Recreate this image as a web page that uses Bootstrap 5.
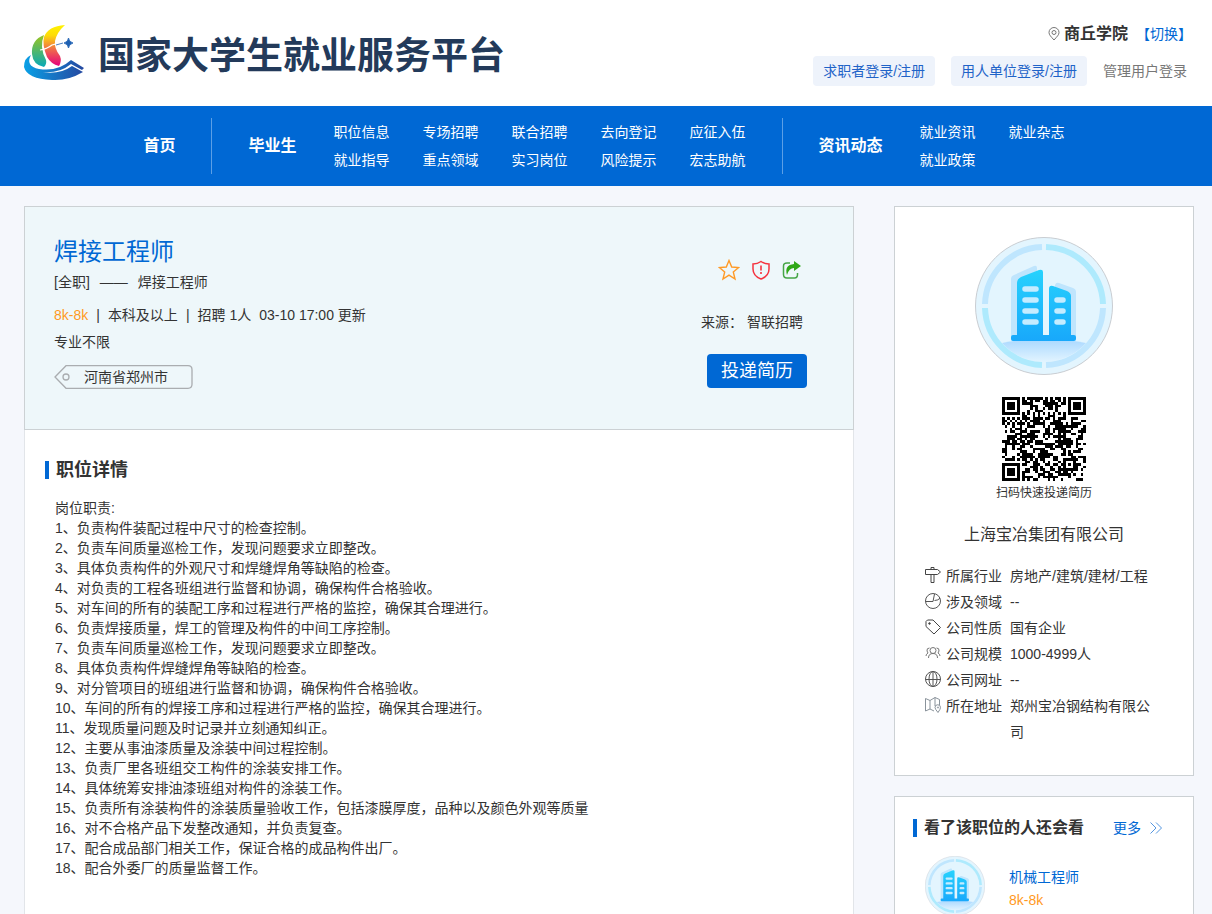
<!DOCTYPE html>
<html lang="zh-CN">
<head>
<meta charset="utf-8">
<meta name="viewport" content="width=device-width, initial-scale=1">
<title>焊接工程师 - 国家大学生就业服务平台</title>
<link href="https://cdn.jsdelivr.net/npm/bootstrap@5.3.0/dist/css/bootstrap.min.css" rel="stylesheet">
<style>
:root { --brand: #0068d4; --ink: #333; --line: #ccd1d4; }
body { font: 14px/20px "Liberation Sans", "Noto Sans CJK SC", sans-serif; color: var(--ink); background: #f5f7fc; }
a { color: var(--brand); text-decoration: none; }
a:hover { text-decoration: underline; }
svg { display: block; flex: none; }
.site-head { padding: 24px 25px 20px 24px; }
.brand-link { gap: 14px; }
.site-name { font-size: 37px; line-height: 56px; font-weight: 700; color: #233a5a; }
.account { gap: 12px; }
.school { font-size: 16px; font-weight: 700; }
.school-row { margin-right: -5px; }
.login-btn { height: 30px; padding: 0 10px; font-size: 14px; line-height: 30px; background: #eef3fb; border: 0; border-radius: 4px; color: #1f63c8; }
.muted-link { color: #777; }
.site-nav { background: var(--brand); min-height: 80px; padding: 12px 4px 12px 0; }
.site-nav a { color: #fff; white-space: nowrap; }
.nav-head { font-size: 16px; font-weight: 700; }
.nav-sub { display: grid; grid-auto-flow: column; grid-template-rows: 28px 28px; column-gap: 33px; line-height: 28px; margin-left: 37px; }
.rule { width: 1px; background: #5c9fe6; margin: 0 36px; }
.page { padding: 20px 18px 20px 24px; gap: 40px; }
.side { width: 300px; flex: none; }
.panel { background: #fff; border: 1px solid var(--line); }
.job-main { background: #fff; border: 1px solid #e2e5e9; border-top: 0; padding: 26px 20px 60px; }
.job-head { background: #eef7fa; border: 1px solid var(--line); padding: 29px 46px 40px 29px; }
.job-title { font-size: 24px; line-height: 32px; color: var(--brand); margin: 0; font-weight: 400; }
.job-kind { gap: 10px; margin: 4px 0 13px; }
.job-major { margin: 7px 0 13px; }
.pay { color: #ff9a1f; }
.city-tag { position: relative; width: 139px; height: 24px; line-height: 24px; padding-left: 30px; }
.city-tag svg { position: absolute; left: 0; top: 0; }
.job-side { width: 108px; padding-top: 23px; }
.job-tools { padding-right: 6px; }
.job-source { margin: 31px 4px 22px 0; }
.apply { width: 100px; height: 34px; font-size: 18px; line-height: 32px; padding: 0; background: var(--brand); color: #fff; border: 0; border-radius: 4px; }
.bar-title { font-weight: 700; line-height: 28px; margin: 0; display: flex; align-items: center; }
.bar-title::before { content: ""; width: 4px; height: 18px; background: var(--brand); margin-right: 7px; }
.bar-lg { font-size: 18px; }
.bar-md { font-size: 16px; }
.duties { margin: 14px 10px 0; }
.duties p { margin: 0; }
.icon-btn { border: 0; background: none; padding: 0; }
.company { padding: 30px; }
.qr-code { margin: 22px auto 2px; }
.qr-note { font-size: 12px; line-height: 20px; }
.company-name { font-size: 16px; line-height: 24px; color: var(--ink); margin: 20px 0 16px; font-weight: 400; }
.facts { margin: 0; }
.facts > div { display: flex; line-height: 26px; }
.facts svg { margin: 4px 5px 0 0; }
.facts dt { font-weight: 400; width: 64px; flex: none; }
.facts dd { margin: 0; }
.also { padding: 17px 30px 30px 18px; margin-top: 20px; }
.also-item { padding: 14px 0 0 12px; }
.also-text { padding-top: 10px; line-height: 23px; }
</style>
</head>
<body>
<svg width="0" height="0" class="position-absolute" aria-hidden="true">
  <defs>
    <linearGradient id="tower" x1="0" y1="0" x2="0" y2="1"><stop offset="0" stop-color="#27d2fd"/><stop offset="1" stop-color="#18a8fb"/></linearGradient>
    <linearGradient id="ground" x1="0" y1="0" x2="0" y2="1"><stop offset="0" stop-color="#a9d8ff"/><stop offset="1" stop-color="#e2f4ff"/></linearGradient>
    <symbol id="building" viewBox="0 0 138 138">
      <circle cx="69" cy="69" r="68.5" fill="#e3f5fe" stroke="#c9cdd2"/>
      <path d="M27 106Q69 98 111 106A56 56 0 0 1 27 106" fill="url(#ground)"/>
      <g fill="none" stroke-width="6">
        <path d="M10 67A59 59 0 0 1 67 10M71 128A59 59 0 0 0 128 71" stroke="#bfe6fe"/>
        <path d="M71 10A59 59 0 0 1 128 67M67 128A59 59 0 0 1 10 71" stroke="#aeeafd"/>
      </g>
      <path d="M36 101V42q0-3 3-4l20-9q3-1 3 2v70zM80 101V48q1-3 4-2l14 5q3 1 3 4v46z" fill="#bfe5fd"/>
      <path d="M36 100q0-2 2-2h4V46q0-4 4-6l18-7q4-1 4 2v63h6V52q0-4 4-3l14 5q4 2 4 5v39h3q2 0 2 2v2q0 2-2 2H38q-2 0-2-2z" fill="url(#tower)"/>
      <path d="M50 52h11M50 63h11M50 74h11M50 85h11M82 63h6M82 74h6M82 85h6" stroke="#c5ecff" stroke-width="5.500" stroke-linecap="round"/>
    </symbol>
  </defs>
</svg>

<header class="site-head bg-white d-flex justify-content-between">
  <a href="#" class="brand-link d-flex align-items-center text-decoration-none">
    <svg width="60" height="60" viewBox="0 2 60 60" aria-hidden="true">
      <defs>
        <linearGradient id="s1" x1="0" y1="0" x2="0" y2="1"><stop offset="0" stop-color="#9bc51d"/><stop offset="1" stop-color="#07a9b9"/></linearGradient>
        <linearGradient id="s2" x1="0" y1="0" x2="0" y2="1"><stop offset="0" stop-color="#fff200"/><stop offset=".25" stop-color="#fddc08"/><stop offset=".6" stop-color="#ef6a4b"/><stop offset="1" stop-color="#e6007e"/></linearGradient>
        <linearGradient id="s3"><stop offset="0" stop-color="#0aa0e6"/><stop offset="1" stop-color="#2548a0"/></linearGradient>
      </defs>
      <path d="M20 12Q7 17 8 31Q9 42 20 44Q23 41 22 37Q15 24 20 12" fill="url(#s1)"/>
      <path d="M41 2Q24 3 20 14Q18 22 23 34Q27 41 35 43Q38 38 36 33Q30 25 31 18Q33 9 41 2" fill="url(#s2)"/>
      <path d="M16 27Q23 26 28 22Q34 20 41 21" fill="none" stroke="#fff" stroke-width="1.200"/>
      <path d="M32 22L39 20" stroke="#1d60b2" stroke-width=".8"/>
      <path d="M40 20Q44 19 44.500 15Q45 19 49 20Q45 21 44.500 25Q44 21 40 20" fill="#1d60b2" stroke="#1d60b2" stroke-width=".8"/>
      <path d="M7 32Q1 43 15 46Q34 49 47 37L60 45L58 47L47 41Q35 51 17 49Q36 52 48 43L59 49Q44 58 28 57Q3 56 0 44Q0 35 7 32" fill="url(#s3)"/>
    </svg>
    <span class="site-name pt-1">国家大学生就业服务平台</span>
  </a>
  <div class="account d-flex flex-column align-items-end justify-content-end">
    <div class="school-row d-flex align-items-center">
      <svg width="12" height="14" viewBox="0 0 12 14" fill="none" stroke="#777"><path d="M6 13C3 9.500 1 8 1 5.500a5 5 0 0 1 10 0C11 8 9 9.500 6 13z"/><circle cx="6" cy="5.500" r="2"/></svg>
      <span class="school ms-1 me-2">商丘学院</span><a href="#">【切换】</a>
    </div>
    <div class="d-flex align-items-center">
      <button type="button" class="login-btn me-3">求职者登录/注册</button>
      <button type="button" class="login-btn me-3">用人单位登录/注册</button>
      <a href="#" class="muted-link">管理用户登录</a>
    </div>
  </div>
</header>

<nav class="site-nav d-flex justify-content-center" aria-label="主导航">
  <a href="#" class="nav-head align-self-center">首页</a>
  <span class="rule"></span>
  <a href="#" class="nav-head align-self-center">毕业生</a>
  <div class="nav-sub">
    <a href="#">职位信息</a><a href="#">就业指导</a>
    <a href="#">专场招聘</a><a href="#">重点领域</a>
    <a href="#">联合招聘</a><a href="#">实习岗位</a>
    <a href="#">去向登记</a><a href="#">风险提示</a>
    <a href="#">应征入伍</a><a href="#">宏志助航</a>
  </div>
  <span class="rule"></span>
  <a href="#" class="nav-head align-self-center">资讯动态</a>
  <div class="nav-sub">
    <a href="#">就业资讯</a><a href="#">就业政策</a>
    <a href="#">就业杂志</a>
  </div>
</nav>

<div class="page d-flex align-items-start">
  <main class="flex-grow-1">
    <section class="job-head d-flex justify-content-between">
      <div>
        <h1 class="job-title">焊接工程师</h1>
        <div class="job-kind d-flex"><span>[全职]</span><span>——</span><span>焊接工程师</span></div>
        <div class="d-flex gap-2"><span class="pay">8k-8k</span><span>|</span><span>本科及以上</span><span>|</span><span>招聘 1人</span><span>03-10 17:00 更新</span></div>
        <div class="job-major">专业不限</div>
        <div class="city-tag">
          <svg width="139" height="24" viewBox="0 0 139 24" fill="none" stroke="#aaadb0" stroke-width="1.300"><path d="M1 12L12 .7H134q4 0 4 4V19.300q0 4-4 4H12z"/><circle cx="12" cy="12" r="3"/></svg>河南省郑州市
        </div>
      </div>
      <div class="job-side d-flex flex-column align-items-end">
        <div class="job-tools d-flex align-items-center gap-2">
          <button type="button" class="icon-btn" aria-label="收藏"><svg width="22" height="22" viewBox="0 0 22 22" fill="none" stroke="#ff9a26" stroke-width="1.400"><path d="M11 1.500l2.700 6.500 7 .5-5.400 4.500 1.700 7-6-3.900-6 3.900 1.700-7L1.300 8.500l7-.5z"/></svg></button>
          <button type="button" class="icon-btn mx-1" aria-label="举报"><svg width="18" height="20" viewBox="0 0 18 20" fill="none" stroke="#f5333f" stroke-width="1.500"><path d="M9 1.500Q12.500 4 17 4V9q0 7-8 10Q1 16 1 9V4Q5.500 4 9 1.500z"/><path d="M9 5.500v5M9 12v2" stroke-width="1.600"/></svg></button>
          <button type="button" class="icon-btn" aria-label="分享"><svg width="19" height="18" viewBox="0 0 19 18"><path d="M8 2H5Q1.500 2 1.500 5v8.500Q1.500 17 5 17h7.500q3 0 3-3.500V12" fill="none" stroke="#46a546" stroke-width="1.500"/><path d="M12 0l7 5-7 5V7Q7 7 5 14Q2 4 12 3z" fill="#30a818"/></svg></button>
        </div>
        <div class="job-source">来源： 智联招聘</div>
        <button type="button" class="apply">投递简历</button>
      </div>
    </section>
    <section class="job-main">
      <h2 class="bar-title bar-lg">职位详情</h2>
      <div class="duties">
        <p>岗位职责:</p>
        <p>1、负责构件装配过程中尺寸的检查控制。</p>
        <p>2、负责车间质量巡检工作，发现问题要求立即整改。</p>
        <p>3、具体负责构件的外观尺寸和焊缝焊角等缺陷的检查。</p>
        <p>4、对负责的工程各班组进行监督和协调，确保构件合格验收。</p>
        <p>5、对车间的所有的装配工序和过程进行严格的监控，确保其合理进行。</p>
        <p>6、负责焊接质量，焊工的管理及构件的中间工序控制。</p>
        <p>7、负责车间质量巡检工作，发现问题要求立即整改。</p>
        <p>8、具体负责构件焊缝焊角等缺陷的检查。</p>
        <p>9、对分管项目的班组进行监督和协调，确保构件合格验收。</p>
        <p>10、车间的所有的焊接工序和过程进行严格的监控，确保其合理进行。</p>
        <p>11、发现质量问题及时记录并立刻通知纠正。</p>
        <p>12、主要从事油漆质量及涂装中间过程控制。</p>
        <p>13、负责厂里各班组交工构件的涂装安排工作。</p>
        <p>14、具体统筹安排油漆班组对构件的涂装工作。</p>
        <p>15、负责所有涂装构件的涂装质量验收工作，包括漆膜厚度，品种以及颜色外观等质量</p>
        <p>16、对不合格产品下发整改通知，并负责复查。</p>
        <p>17、配合成品部门相关工作，保证合格的成品构件出厂。</p>
        <p>18、配合外委厂的质量监督工作。</p>
      </div>
    </section>
  </main>

  <aside class="side">
    <section class="panel company">
      <svg class="mx-auto" width="138" height="138" role="img" aria-label="公司标志"><use href="#building"/></svg>
      <svg id="qr" class="qr-code" width="84" height="84" viewBox="0 0 33 33" shape-rendering="crispEdges" role="img" aria-label="二维码"><path fill="#000"/></svg>
      <div class="qr-note text-center">扫码快速投递简历</div>
      <h2 class="company-name text-center">上海宝冶集团有限公司</h2>
      <dl class="facts">
        <div><svg width="16" height="16" viewBox="0 0 16 16" fill="none" stroke="#444"><path d="M.5 2.500h12l3 2.500-3 2.500H.5zM6 2V.5h3V2M6 7.500v8h3v-8"/></svg><dt>所属行业</dt><dd>房地产/建筑/建材/工程</dd></div>
        <div><svg width="16" height="16" viewBox="0 0 16 16" fill="none" stroke="#555"><circle cx="8" cy="8" r="7.500"/><path d="M.5 8.500H8L9.500 1M9.500 7.500q4 0 5.500-2.500"/></svg><dt>涉及领域</dt><dd>--</dd></div>
        <div><svg width="16" height="16" viewBox="0 0 16 16" fill="none" stroke="#444"><path d="M1 2.500L2.500 1H8l7.500 7.500L9 15 1 7.500z"/><circle cx="4.500" cy="4.500" r=".8" fill="#444"/></svg><dt>公司性质</dt><dd>国有企业</dd></div>
        <div><svg width="16" height="16" viewBox="0 0 16 16" fill="none" stroke="#777"><circle cx="8" cy="5.500" r="3"/><path d="M3.500 13q0-4.500 4.500-4.500t4.500 4.500M4.500 3Q1.500 3 2 6l1 2Q1 9 1 11M11.500 3q3 0 2.500 3l-1 2q2 1 2 3"/></svg><dt>公司规模</dt><dd>1000-4999人</dd></div>
        <div><svg width="16" height="16" viewBox="0 0 16 16" fill="none" stroke="#555"><circle cx="8" cy="8" r="7.500"/><ellipse cx="8" cy="8" rx="4" ry="7.500"/><path d="M.5 8.500h15M8 .5v15"/></svg><dt>公司网址</dt><dd>--</dd></div>
        <div><svg width="16" height="16" viewBox="0 0 16 16" fill="none" stroke="#8a939b"><path d="M9 14l-4-2-4.500 2V1.500L5 3.500l5-3 4.500 2V8M5 3.500V12M10 .5V9M13 15.500Q10 12 10 10.500a2.700 2.700 0 0 1 5.500 0Q15.500 12 13 15.500z"/><circle cx="13" cy="10.500" r=".6"/></svg><dt>所在地址</dt><dd>郑州宝冶钢结构有限公司</dd></div>
      </dl>
    </section>
    <section class="panel also">
      <div class="d-flex justify-content-between align-items-center">
        <h2 class="bar-title bar-md">看了该职位的人还会看</h2>
        <a href="#" class="d-flex align-items-center gap-2">更多 <svg width="14" height="12" viewBox="0 0 14 12" fill="none" stroke="#5596e0"><path d="M1.500 .5L7 6l-5.500 5.500M7 .5L12.500 6 7 11.500"/></svg></a>
      </div>
      <div class="also-item d-flex">
        <svg width="60" height="60" aria-hidden="true"><use href="#building"/></svg>
        <div class="also-text ms-4"><a href="#" class="d-block">机械工程师</a><span class="pay d-block">8k-8k</span></div>
      </div>
    </section>
  </aside>
</div>

<script src="https://cdn.jsdelivr.net/npm/bootstrap@5.3.0/dist/js/bootstrap.bundle.min.js"></script>
<script>
// Draws the apply code: three finder squares, one alignment square, timing lines and data cells.
const n = 33;
let seed = 20240310, d = "";
const ring = (x, y, cx, cy) => Math.max(Math.abs(x - cx), Math.abs(y - cy));
for (let y = 0; y < n; y++) for (let x = 0; x < n; x++) {
  seed = (seed * 48271) % 2147483647;
  let on = seed % 100 < 52;
  if (x === 6 || y === 6) on = (x + y) % 2 === 0;
  for (const [cx, cy] of [[3, 3], [n - 4, 3], [3, n - 4]]) {
    const r = ring(x, y, cx, cy);
    if (r <= 4) on = r === 3 || r <= 1;
  }
  const a = ring(x, y, n - 7, n - 7);
  if (a <= 2) on = a !== 1;
  if (on) d += `M${x} ${y}h1v1h-1z`;
}
document.querySelector("#qr path").setAttribute("d", d);
</script>
</body>
</html>
